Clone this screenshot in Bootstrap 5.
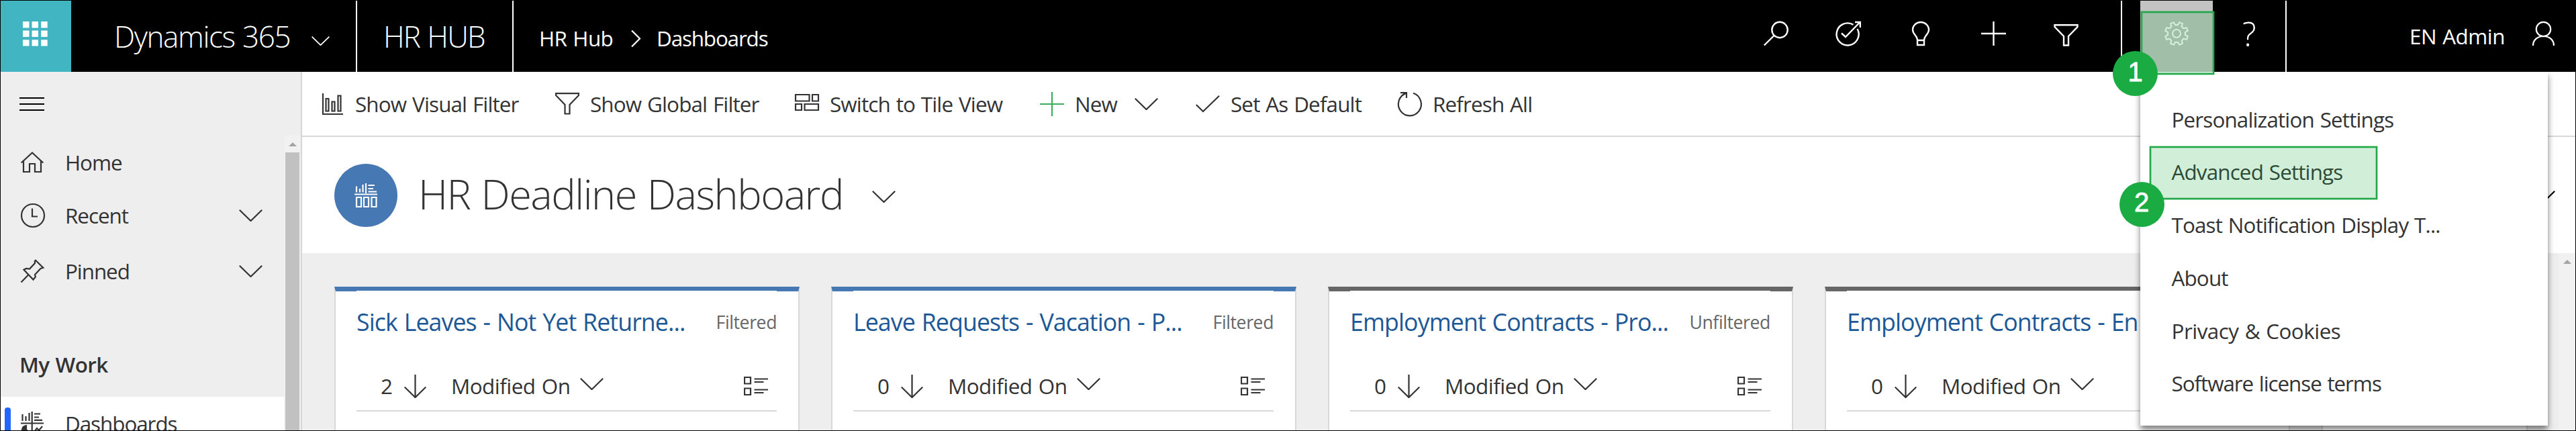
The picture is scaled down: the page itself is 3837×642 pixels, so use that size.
<!DOCTYPE html>
<html lang="en">
<head>
<meta charset="utf-8">
<title>HR Deadline Dashboard</title>
<link href="https://cdn.jsdelivr.net/npm/bootstrap@5.3.0/dist/css/bootstrap.min.css" rel="stylesheet">
<style>
  html, body { height: 100%; }
  body { font-family: "Open Sans", "Noto Sans", sans-serif; font-size: 31.4px; line-height: 1.2; color: #333; letter-spacing: -.85px; word-spacing: 1.5px; overflow: hidden; border: 1px solid #000; }
  svg { display: block; flex: none; fill: none; stroke: currentColor; stroke-width: 2.2; overflow: visible; }
  .chev { width: 35px; height: 18px; }
  .ls-wide { letter-spacing: -.5px; }
  .ls-tight { letter-spacing: -1.05px; }

  /* top bar */
  .topbar { height: 106px; background: #000; color: #fff; }
  .waffle { width: 105px; background: #42b5c3; padding: 31px 0 0 33px; }
  .waffle svg { fill: #fff; stroke: none; }
  .brand { width: 424px; padding: 0 39px 0 64px; font-size: 44px; font-weight: 300; letter-spacing: -1.4px; }
  .brand svg { margin-top: 14px; }
  .area { width: 231px; padding-left: 39px; font-size: 44px; font-weight: 300; letter-spacing: -1.8px; }
  .rule { width: 2px; background: #fff; }
  .crumbs { padding: 6px 0 0 38px; }
  .crumbs > :first-child { width: 137px; letter-spacing: -.6px; }
  .crumbs > :nth-child(2) { margin-right: 24px; }
  .crumbs > :last-child { letter-spacing: -1.15px; }
  .cell { width: 108px; padding-top: 31px; }
  .tools { margin-right: 28px; }
  .tools svg { stroke-width: 2.4; }
  .gear { background: #c3c3c3; margin-left: 27px; }
  .qmark { font-size: 49px; font-weight: 300; line-height: 36px; }
  .user { width: 430px; padding: 0 31px 0 183px; }

  /* settings menu */
  .flyout { top: 106px; left: 0; width: 607px; height: 527px; padding-top: 31px; background: #fff; color: #333; box-shadow: 0 6px 9px rgba(0,0,0,.5); clip-path: inset(0 -20px -20px -20px); }
  .flyout .item { height: 78.75px; padding-left: 46.5px; }
  .hilite { background: rgba(27,170,67,.2); border: 2px solid #22a848; box-shadow: 0 0 0 .6px rgba(27,170,67,.6), inset 0 0 0 1px rgba(27,170,67,.3); }
  .hilite-gear { left: 1px; top: 16px; width: 109px; height: 94px; }
  .hilite-item { left: 14px; top: 1px; width: 339px; height: 79px; }
  .step { width: 67px; height: 67px; background: #1bab43; color: #fff; font: 40px/1 "Liberation Sans", sans-serif; letter-spacing: 0; -webkit-text-stroke: .8px #fff; padding-bottom: 6px; }
  .step-1 { left: -41px; top: 75px; }
  .step-2 { left: -31.5px; top: 269.5px; }

  /* side navigation */
  .side { width: 449px; background: #eee; border-right: 2px solid #d6d6d6; }
  .burger { height: 95px; padding-left: 28px; color: #000; }
  .navrow { height: 79px; padding: 0 32px 0 30px; }
  .navrow > .ico { width: 66px; }
  .pinrow { margin-top: 4px; }
  .group { height: 97px; margin-top: 51px; padding-left: 28px; font-weight: 600; letter-spacing: -.6px; }
  .mark-bar { left: 6px; top: 16px; width: 9px; height: 47px; border-radius: 4px; background: #2266ff; }
  .track { width: 25px; background: #f1f1f1; padding-top: 10px; }
  .thumb { width: 21px; margin: 9px 0 0 2px; background: #c1c1c1; }
  .tri { width: 0; height: 0; border: 6px solid transparent; border-top: 0; border-bottom: 6px solid #a3a3a3; }

  /* command bar */
  .cmdbar { display: grid; grid-template-columns: 350px 357px 365px 232px 301px auto; height: 97px; padding-left: 27px; border-bottom: 2px solid #d8d8d8; }
  .cmdbar .slot { width: 36px; margin-right: 16px; }
  .cmdbar .chev { margin-left: 26px; }
  .cmdbar .add { color: #3aae5a; }
  .titlebar { height: 173px; padding: 0 30px 0 48px; }
  .disc { width: 94px; height: 94px; background: #4678b4; color: #fff; }
  .titlebar h1 { margin: 0 0 4px 31px; width: 676px; font-size: 61.2px; font-weight: 300; letter-spacing: -1.45px; }

  /* stream cards */
  .board { background: #eee; }
  .streams { padding: 50px 0 0 48px; gap: 47px; }
  .stream { flex: none; width: 693px; background: #fff; border: 2px solid #d8d8d8; border-top: 7px solid #4678b4; border-bottom: 0; padding: 0 32px 0 31px; }
  .stream.plain { border-top-color: #666; }
  .stream.part { width: 307px; }
  .stream-head { height: 92px; margin-top: -1px; background: #fff; color: #1d5896; font-size: 35.7px; letter-spacing: -.9px; }
  .stream-head .state { color: #666; font-size: 26.6px; padding-top: 3px; letter-spacing: -.4px; }
  .sorter { display: grid; grid-template-columns: 35px 70px 192px 1fr auto; margin-top: 14px; height: 74px; padding: 0 13px 0 36px; border-bottom: 2px solid #d8d8d8; letter-spacing: -.5px; }
  .sorter .chev { margin-bottom: 6px; }
</style>
</head>
<body class="d-flex flex-column">

<svg width="0" height="0" class="position-absolute">
  <symbol id="chev" viewBox="0 0 35 18" preserveAspectRatio="none"><path d="M.8.8 17.5 17 34.2.8"/></symbol>
  <symbol id="funnel" viewBox="0 0 36 33"><path d="M1 1.2H35V4L21.5 18V31.5H14.5V18L1 4Z"/></symbol>
  <symbol id="list" viewBox="0 0 36 28"><path d="M1 1H10V10.500H1ZM1 17.500H10V27H1ZM15.500 3.500H36M15.500 8H29.500M15.500 19.500H36M15.500 24H29.500"/></symbol>
  <symbol id="down" viewBox="0 0 33 35"><path d="M16.500 0V34M.7 18.500 16.500 34 32.300 18.500"/></symbol>
</svg>

<header class="topbar d-flex flex-shrink-0 position-relative z-3">
  <a class="waffle" href="#" aria-label="Apps"><svg width="37" height="37"><path d="M0 0h9.500v9.500H0zM13.500 0H23v9.500h-9.500zM27.200 0h9.500v9.500h-9.500zM0 13.500h9.500V23H0zM13.500 13.500H23V23h-9.500zM27.200 13.500h9.500V23h-9.500zM0 27.200h9.500v9.300H0zM13.500 27.200H23v9.300h-9.500zM27.200 27.200h9.500v9.300h-9.500z"/></svg></a>
  <div class="brand d-flex align-items-center justify-content-between text-nowrap">Dynamics 365<svg width="27" height="14"><use href="#chev"/></svg></div>
  <div class="rule"></div>
  <div class="area d-flex align-items-center text-nowrap">HR HUB</div>
  <div class="rule"></div>
  <nav class="crumbs d-flex align-items-center text-nowrap"><span>HR Hub</span><svg width="14" height="25"><path d="M1 .5 13 12.500 1 24.500"/></svg><span>Dashboards</span></nav>

  <div class="tools d-flex ms-auto">
    <div class="cell d-flex justify-content-center"><svg width="37" height="36"><circle cx="24" cy="12.500" r="11.700"/><path d="M15.500 21 .8 35.500"/></svg></div>
    <div class="cell d-flex justify-content-center"><svg width="37" height="36"><path d="M25.500 4.800A16.500 16.500 0 1 0 31.500 11M8 17.500 14 23 35 1.500M28 1H35.800V9"/></svg></div>
    <div class="cell d-flex justify-content-center"><svg width="26" height="36"><path d="M8 28C8 21 1 19 1 12.500A12 11.500 0 0 1 25 12.500C25 19 18 21 18 28V35H8ZM8 28H18"/></svg></div>
    <div class="cell d-flex justify-content-center"><svg width="37" height="36"><path d="M18.500 0V36M0 18H37"/></svg></div>
    <div class="cell d-flex justify-content-center"><svg width="37" height="33" class="mt-1"><use href="#funnel"/></svg></div>
  </div>
  <div class="rule"></div>
  <div class="gear cell d-flex justify-content-center position-relative">
    <svg width="36" height="36"><path d="M19.900 5.100 22.300 1.300 26.800 3.100 25.700 7.600 28.400 10.300 32.900 9.200 34.700 13.700 30.900 16.100V19.900L34.700 22.300 32.900 26.800 28.400 25.700 25.700 28.400 26.800 32.900 22.300 34.700 19.900 30.900H16.100L13.700 34.700 9.200 32.900 10.300 28.400 7.600 25.700 3.100 26.800 1.300 22.300 5.100 19.900V16.100L1.300 13.700 3.100 9.200 7.600 10.300 10.300 7.600 9.200 3.100 13.700 1.300 16.100 5.100Z"/><circle cx="18" cy="18" r="6"/></svg>
    <div class="flyout position-absolute text-nowrap">
      <div class="item d-flex align-items-center">Personalization Settings</div>
      <div class="item d-flex align-items-center position-relative">Advanced Settings<div class="hilite hilite-item position-absolute"></div></div>
      <div class="item d-flex align-items-center">Toast Notification Display T...</div>
      <div class="item d-flex align-items-center">About</div>
      <div class="item d-flex align-items-center ls-wide">Privacy &amp; Cookies</div>
      <div class="item d-flex align-items-center ls-tight">Software license terms</div>
    </div>
    <div class="hilite hilite-gear position-absolute"></div>
    <div class="step step-1 position-absolute rounded-circle d-flex align-items-center justify-content-center">1</div>
    <div class="step step-2 position-absolute rounded-circle d-flex align-items-center justify-content-center">2</div>
  </div>
  <div class="cell qmark text-center">?</div>
  <div class="rule"></div>
  <div class="user d-flex align-items-center justify-content-between text-nowrap ls-wide">EN Admin<svg width="33" height="36" class="mb-2"><circle cx="16.500" cy="11.500" r="10.700"/><path d="M1 36C1 27 8 22 16.500 22S32 27 32 36"/></svg></div>
</header>

<div class="d-flex flex-grow-1 overflow-hidden">
  <aside class="side d-flex flex-column flex-shrink-0">
    <div class="burger d-flex align-items-center flex-shrink-0"><svg width="37" height="20"><path d="M0 1H37M0 10H37M0 19H37"/></svg></div>
    <div class="d-flex flex-grow-1 overflow-hidden">
      <nav class="flex-grow-1">
        <div class="navrow d-flex align-items-center ls-tight"><span class="ico"><svg width="34" height="31"><path d="M.7 16.500 17 1.500 33.300 16.500M4 14V30H13V18H21V30H30V14"/></svg></span>Home</div>
        <div class="navrow d-flex align-items-center ls-tight"><span class="ico"><svg width="36" height="36"><circle cx="18" cy="18" r="17"/><path d="M17 7.500V19.500H25"/></svg></span>Recent<svg class="chev ms-auto"><use href="#chev"/></svg></div>
        <div class="navrow pinrow d-flex align-items-center ls-tight"><span class="ico"><svg width="34" height="34"><path d="M22 .8 33.300 11.800 29.500 13 21 22 21.800 25.500 18.500 29.500 4.500 14.800 8 13 13 13.500 21 5 20.800 2ZM11.800 21.700.5 33.500"/></svg></span>Pinned<svg class="chev ms-auto"><use href="#chev"/></svg></div>
        <div class="group d-flex align-items-center">My Work</div>
        <div class="navrow d-flex align-items-center bg-white position-relative ls-tight"><span class="mark-bar position-absolute"></span><span class="ico"><svg width="34" height="35"><path d="M2.500 4V14M7.500 7V14M12.500 2V14M16.700 0V35M20 3.500H29M20 8.500H27M20 12.800H32M0 17.500H34M20 30 24 25 27 28 32 22"/><path d="M2 27A6.500 6.500 0 0 1 8 21V27L12.500 31A6.500 6.500 0 0 1 2 27Z" fill="currentColor"/></svg></span>Dashboards</div>
      </nav>
      <div class="track d-flex flex-column"><div class="tri align-self-center"></div><div class="thumb flex-grow-1"></div></div>
    </div>
  </aside>

  <main class="d-flex flex-column flex-grow-1 overflow-hidden bg-white text-nowrap">
    <div class="cmdbar align-items-center flex-shrink-0">
      <div class="d-flex align-items-center"><span class="slot"><svg width="36" height="32"><path d="M4 0V31H34M8.500 8H12.500V26.500H8.500ZM17.500 12.500H21.500V26.500H17.500ZM26.500 3.500H30.500V26.500H26.500Z"/></svg></span>Show Visual Filter</div>
      <div class="d-flex align-items-center"><span class="slot"><svg width="36" height="33"><use href="#funnel"/></svg></span>Show Global Filter</div>
      <div class="d-flex align-items-center"><span class="slot"><svg width="36" height="25" class="mb-1"><path d="M1 1H21.500V10.500H1ZM26 1H35V10.500H26ZM1 15H10V24H1ZM14.500 15H35V24H14.500Z"/></svg></span>Switch to Tile View</div>
      <div class="d-flex align-items-center"><span class="slot add"><svg width="36" height="36"><path d="M18 0V36M0 18H36"/></svg></span>New<svg class="chev"><use href="#chev"/></svg></div>
      <div class="d-flex align-items-center"><span class="slot"><svg width="36" height="25"><path d="M.8 14 11 24 35 .8"/></svg></span>Set As Default</div>
      <div class="d-flex align-items-center"><span class="slot"><svg width="36" height="36"><path d="M23 1.800A17 17.200 0 1 1 12.500 1.900M4 1.200H13V9"/></svg></span>Refresh All</div>
    </div>

    <div class="titlebar d-flex align-items-center flex-shrink-0">
      <div class="disc rounded-circle d-flex align-items-center justify-content-center"><svg width="34" height="36"><path d="M3 4.500V13.500M8 8V13.500M12.500 2V13.500M17 0V15M20.500 3H30M20.500 8H28M20.500 12.500H33M0 16.500H34M3 21H10V35H3ZM14 21H21V35H14ZM25.500 21H32.500V35H25.500Z"/></svg></div>
      <h1>HR Deadline Dashboard</h1>
      <svg class="chev mt-1"><use href="#chev"/></svg>
      <svg class="chev ms-auto text-black mt-1"><use href="#chev"/></svg>
    </div>

    <div class="board d-flex flex-grow-1 overflow-hidden">
      <div class="streams d-flex flex-grow-1">
        <section class="stream">
          <div class="stream-head d-flex align-items-center justify-content-between">Sick Leaves - Not Yet Returne...<span class="state">Filtered</span></div>
          <div class="sorter align-items-center"><span>2</span><svg width="33" height="35"><use href="#down"/></svg><span>Modified On</span><svg class="chev"><use href="#chev"/></svg><svg width="36" height="28"><use href="#list"/></svg></div>
        </section>
        <section class="stream">
          <div class="stream-head d-flex align-items-center justify-content-between">Leave Requests - Vacation - P...<span class="state">Filtered</span></div>
          <div class="sorter align-items-center"><span>0</span><svg width="33" height="35"><use href="#down"/></svg><span>Modified On</span><svg class="chev"><use href="#chev"/></svg><svg width="36" height="28"><use href="#list"/></svg></div>
        </section>
        <section class="stream plain">
          <div class="stream-head d-flex align-items-center justify-content-between">Employment Contracts - Pro...<span class="state">Unfiltered</span></div>
          <div class="sorter align-items-center"><span>0</span><svg width="33" height="35"><use href="#down"/></svg><span>Modified On</span><svg class="chev"><use href="#chev"/></svg><svg width="36" height="28"><use href="#list"/></svg></div>
        </section>
        <section class="stream plain">
          <div class="stream-head d-flex align-items-center">Employment Contracts - En</div>
          <div class="sorter align-items-center"><span>0</span><svg width="33" height="35"><use href="#down"/></svg><span>Modified On</span><svg class="chev"><use href="#chev"/></svg></div>
        </section>
        <section class="stream plain part"></section>
      </div>
      <div class="track flex-shrink-0"><div class="tri mx-auto"></div></div>
    </div>
  </main>
</div>

<script src="https://cdn.jsdelivr.net/npm/bootstrap@5.3.0/dist/js/bootstrap.bundle.min.js"></script>
</body>
</html>
